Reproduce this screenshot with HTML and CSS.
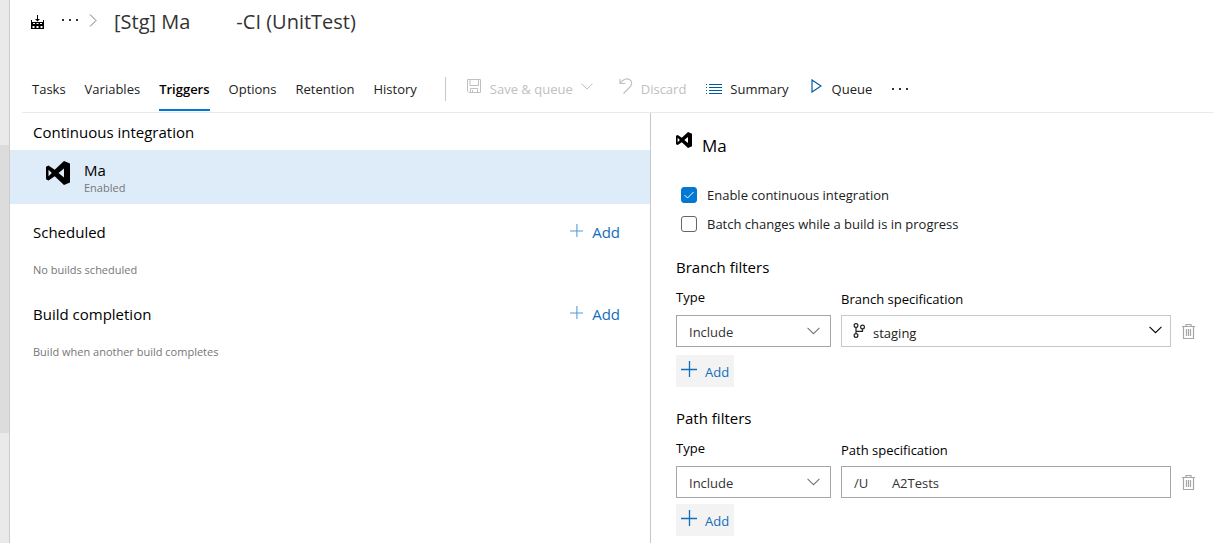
FILE: index.html
```html
<!DOCTYPE html>
<html lang="en">
<head>
<meta charset="utf-8">
<title>[Stg] Ma -CI (UnitTest)</title>
<link rel="stylesheet" href="styles.css">
</head>
<body>
<svg class="defs" aria-hidden="true">
  <symbol id="vs" viewBox="0 0 24 24"><path fill-rule="evenodd" d="M18 0 24 2.500V21.500L18 24 8.700 15.200 2.500 19.500 0 18.300V5.700L2.500 4.500 8.700 8.800ZM18 7.500 12.500 12 18 16.500ZM2.500 8.800V15.200L5.800 12Z"/></symbol>
  <symbol id="chevron" viewBox="0 0 12 7"><path d="M.5.7 6 6 11.500.7" fill="none" stroke="currentColor"/></symbol>
  <symbol id="plus" viewBox="0 0 16 16"><path d="M8.500 0V16M0 8.500H16" fill="none" stroke="currentColor" stroke-width="1.300"/></symbol>
  <symbol id="trash" viewBox="0 0 13 16"><path d="M0 3.500H13M4 3V1.500H9V3M1.500 4V15.500H11.500V4M4.500 6V13M6.500 6V13M8.500 6V13" fill="none" stroke="currentColor" stroke-width="1.200"/></symbol>
</svg>
<div class="app">
  <div class="rail"><div class="rail-thumb"></div></div>
  <main class="main">
    <header class="header">
      <div class="crumbs">
        <svg class="build-icon" viewBox="0 0 13 14"><path d="M6 0H7V4H9L6.500 6.500 4 4H6ZM0 5H1V7H12V5H13V14H0ZM2 8V9H4V8ZM5.500 8V9H7.500V8ZM9 8V9H11V8ZM1.500 11V13H3.500V11ZM5.500 11V13H7.500V11ZM9.500 11V13H11.500V11Z" fill-rule="evenodd"/></svg>
        <button class="more" aria-label="More"><i></i><i></i><i></i></button>
        <svg class="crumb-sep" viewBox="0 0 8 13"><path d="M1 .5 7 6.500 1 12.500" fill="none" stroke="currentColor"/></svg>
        <h1 class="title"><span>[Stg] Ma</span><span>-CI (UnitTest)</span></h1>
      </div>
      <div class="toolbar">
        <nav class="tabs">
          <a class="tab" href="#tasks">Tasks</a>
          <a class="tab" href="#variables">Variables</a>
          <a class="tab active" href="#triggers">Triggers</a>
          <a class="tab" href="#options">Options</a>
          <a class="tab" href="#retention">Retention</a>
          <a class="tab" href="#history">History</a>
        </nav>
        <div class="commands">
          <button class="cmd save" disabled>
            <svg class="ico16" viewBox="0 0 16 16"><path d="M1.500 1.500H14.500V14.500H3L1.500 13ZM4 1.500V7.500H12.500V1.500M4.500 14.500V10.500H11.500V14.500M6.500 12V14.500" fill="none" stroke="currentColor"/></svg>
            <span>Save &amp; queue</span>
            <svg class="chev"><use href="#chevron"/></svg>
          </button>
          <button class="cmd discard" disabled>
            <svg class="undo" viewBox="0 0 14 17"><path d="M1 1V5.500H6.500M1.300 5.200C4 1 8 0 10.500 1.500 13 3 13.500 6.500 11 9L4.500 15.500" fill="none" stroke="currentColor" stroke-width="1.200"/></svg>
            <span>Discard</span>
          </button>
          <button class="cmd summary">
            <svg class="ico16 low" viewBox="0 0 16 16"><path d="M3 3.500H16M3 6.500H16M3 9.500H16M3 12.500H16M0 3.500H1M0 6.500H1M0 9.500H1M0 12.500H1" fill="none" stroke="currentColor" shape-rendering="crispEdges"/></svg>
            <span>Summary</span>
          </button>
          <button class="cmd queue">
            <svg class="play" viewBox="0 0 11 14"><path d="M1 1 10 7 1 13Z" fill="none" stroke="currentColor" stroke-width="1.200"/></svg>
            <span>Queue</span>
          </button>
          <button class="more" aria-label="More actions"><i></i><i></i><i></i></button>
        </div>
      </div>
    </header>
    <div class="panes">
      <section class="list">
        <div class="group-head first"><h2>Continuous integration</h2></div>
        <div class="repo selected">
          <svg class="vs-large"><use href="#vs"/></svg>
          <div class="repo-text"><div class="repo-name">Ma</div><div class="repo-state">Enabled</div></div>
        </div>
        <div class="group">
          <div class="group-head"><h2>Scheduled</h2><button class="add-link"><svg class="plus-small"><use href="#plus"/></svg>Add</button></div>
          <p class="note">No builds scheduled</p>
        </div>
        <div class="group">
          <div class="group-head"><h2>Build completion</h2><button class="add-link"><svg class="plus-small"><use href="#plus"/></svg>Add</button></div>
          <p class="note">Build when another build completes</p>
        </div>
      </section>
      <section class="detail">
        <div class="detail-head"><svg class="vs-small"><use href="#vs"/></svg><h2>Ma</h2></div>
        <div class="checks">
          <label class="check"><input type="checkbox" checked><svg class="tick" viewBox="0 0 16 16"><path d="M3.500 8 6.500 11 12.500 5" fill="none" stroke="currentColor"/></svg>Enable continuous integration</label>
          <label class="check"><input type="checkbox">Batch changes while a build is in progress</label>
        </div>
        <section class="filters">
          <h3>Branch filters</h3>
          <div class="filter-grid">
            <label for="branch-type">Type</label>
            <label class="spec-label" for="branch-spec">Branch specification</label>
            <div class="field"><select id="branch-type"><option>Include</option></select><svg class="field-chev"><use href="#chevron"/></svg></div>
            <div class="field branch">
              <svg class="branch-icon" viewBox="0 0 12 15"><g fill="none" stroke="currentColor" stroke-width="1.200"><circle cx="3" cy="2.500" r="1.900"/><circle cx="3" cy="12.500" r="1.900"/><circle cx="9.500" cy="4" r="1.900"/><path d="M3 4.400V10.600M9.500 6V8.300H3"/></g></svg>
              <select id="branch-spec"><option>staging</option></select><svg class="field-chev"><use href="#chevron"/></svg>
            </div>
            <button class="trash" aria-label="Delete branch filter"><svg><use href="#trash"/></svg></button>
          </div>
          <button class="add-box"><svg><use href="#plus"/></svg>Add</button>
        </section>
        <section class="filters path">
          <h3>Path filters</h3>
          <div class="filter-grid">
            <label for="path-type">Type</label>
            <label class="spec-label" for="path-spec">Path specification</label>
            <div class="field"><select id="path-type"><option>Include</option></select><svg class="field-chev"><use href="#chevron"/></svg></div>
            <div class="field"><input id="path-spec" type="text" value="/U       A2Tests"></div>
            <button class="trash" aria-label="Delete path filter"><svg><use href="#trash"/></svg></button>
          </div>
          <button class="add-box"><svg><use href="#plus"/></svg>Add</button>
        </section>
      </section>
    </div>
  </main>
</div>
</body>
</html>
```
FILE: styles.css
```css
* { box-sizing: border-box; }
body, h1, h2, h3, p { margin: 0; }
body {
  font: 13px/20px "Segoe UI", "Open Sans", "Noto Sans", sans-serif;
  color: #212121;
  background: #fff;
}
h2, h3 { font-size: 15px; font-weight: 400; line-height: 20px; color: #000; }
button { font: inherit; color: inherit; background: none; border: 0; padding: 0; }
svg { flex: none; }
.defs { position: absolute; width: 0; height: 0; }

.app { display: flex; min-height: 100vh; }
.rail { width: 10px; flex: none; background: #eaeaea; border-right: 1px solid #ccc; padding-top: 145px; }
.rail-thumb { height: 288px; background: #dcdcdc; }
.main { flex: 1; min-width: 0; display: flex; flex-direction: column; }

.header { margin-left: 12px; border-bottom: 1px solid #eaeaea; }
.crumbs { display: flex; align-items: center; height: 43px; padding-left: 9px; }
.build-icon { width: 13px; height: 14px; }
.crumbs .more { margin: 0 11px 4px 18px; }
.crumb-sep { width: 8px; height: 13px; color: #777; margin: 0 17px 2px 0; }
.title { display: flex; gap: 46px; font-size: 20px; font-weight: 400; line-height: 28px; color: #333; }
.more { display: flex; gap: 5px; }
.more i { width: 2px; height: 2px; background: #333; }

.toolbar { display: flex; align-items: center; height: 69px; padding: 22px 0 0 10px; }
.tabs { display: flex; gap: 19px; align-self: stretch; }
.tab { color: #212121; text-decoration: none; padding-top: 14px; height: 46px; border-bottom: 2px solid transparent; }
.tab.active { color: #000; font-weight: 600; border-color: #0078d4; }
.commands { display: flex; align-items: center; height: 24px; margin-left: 28px; border-left: 1px solid #c8c8c8; padding-left: 20px; }
.cmd { display: flex; align-items: center; gap: 8px; margin-right: 20px; }
.cmd.save { margin-right: 26px; }
.cmd.queue { gap: 10px; margin-left: 2px; }
.cmd:disabled { color: #c0c0c0; }
.ico16 { width: 16px; height: 16px; }
.cmd .ico16:not(.low), .undo, .play { margin-bottom: 5px; }
.chev { width: 12px; height: 7px; margin-bottom: 4px; }
.undo { width: 14px; height: 17px; }
.play { width: 11px; height: 14px; }
.summary svg, .queue svg { color: #005a9e; }

.panes { display: flex; flex: 1; }
.list { flex: 0 0 641px; border-right: 1px solid #c8c8c8; }
.group-head { display: flex; justify-content: space-between; padding: 0 30px 0 23px; }
.first { padding-top: 9px; padding-bottom: 8px; }
.repo { display: flex; align-items: center; height: 54px; padding-left: 36px; gap: 14px; }
.selected { background: #deecf9; }
.vs-large { width: 24px; height: 24px; margin-bottom: 8px; }
.repo-text { padding-top: 3px; }
.repo-name { font-size: 15px; line-height: 18px; color: #000; }
.repo-state { font-size: 11px; line-height: 17px; color: #767676; }
.group { padding-top: 18px; }
.add-link { display: flex; align-items: center; gap: 9px; font-size: 15px; color: #106ebe; }
.plus-small { width: 13px; height: 13px; margin-bottom: 4px; color: #4f9bd9; }
.note { font-size: 11px; line-height: 16px; color: #767676; padding: 20px 23px 8px; }

.detail { flex: 1; min-width: 0; padding: 19px 16px 0 25px; }
.detail-head { display: flex; gap: 10px; }
.vs-small { width: 16px; height: 16px; }
.detail-head h2 { font-size: 17px; line-height: 28px; }
.checks { display: grid; gap: 9px; padding: 25px 0 0 5px; }
.check { position: relative; display: flex; align-items: center; gap: 10px; color: #212121; }
.check input { appearance: none; width: 16px; height: 16px; margin: 0; border: 1px solid #666; border-radius: 3px; }
.check input:checked { background: #0078d4; border-color: #0078d4; }
.tick { position: absolute; left: 0; width: 16px; height: 16px; color: #fff; }
.filters { padding-top: 23px; }
.filters.path { padding-top: 21px; }
.filter-grid { display: grid; grid-template-columns: 155px 1fr 16px; column-gap: 10px; padding-top: 9px; color: #000; }
.filter-grid label { height: 29px; padding-top: 1px; }
.filter-grid .spec-label { grid-column: 2 / 4; padding-top: 3px; }
.field { position: relative; }
.field select, .field input { appearance: none; width: 100%; height: 32px; font: inherit; color: #333; background: #fff; border: 1px solid #a6a6a6; border-radius: 0; padding: 2px 12px 0; margin: 0; display: block; }
.field-chev { position: absolute; right: 11px; top: 12px; width: 13px; height: 8px; color: #767676; pointer-events: none; }
.field.branch select { border-color: #c8c8c8; padding: 4px 30px 0 31px; color: #212121; }
.branch .field-chev { right: 9px; color: #000; top: 11px; }
.branch-icon { position: absolute; left: 12px; top: 8px; width: 12px; height: 15px; color: #212121; }
.trash { display: flex; align-items: center; color: #a6a6a6; padding-left: 1px; }
.trash svg { width: 13px; height: 16px; }
.add-box { display: flex; align-items: center; gap: 8px; height: 32px; margin-top: 8px; padding: 2px 5px 0; background: #f3f3f3; color: #106ebe; }
.path .add-box { margin-top: 6px; }
.add-box svg { width: 16px; height: 16px; margin-bottom: 6px; }
```
